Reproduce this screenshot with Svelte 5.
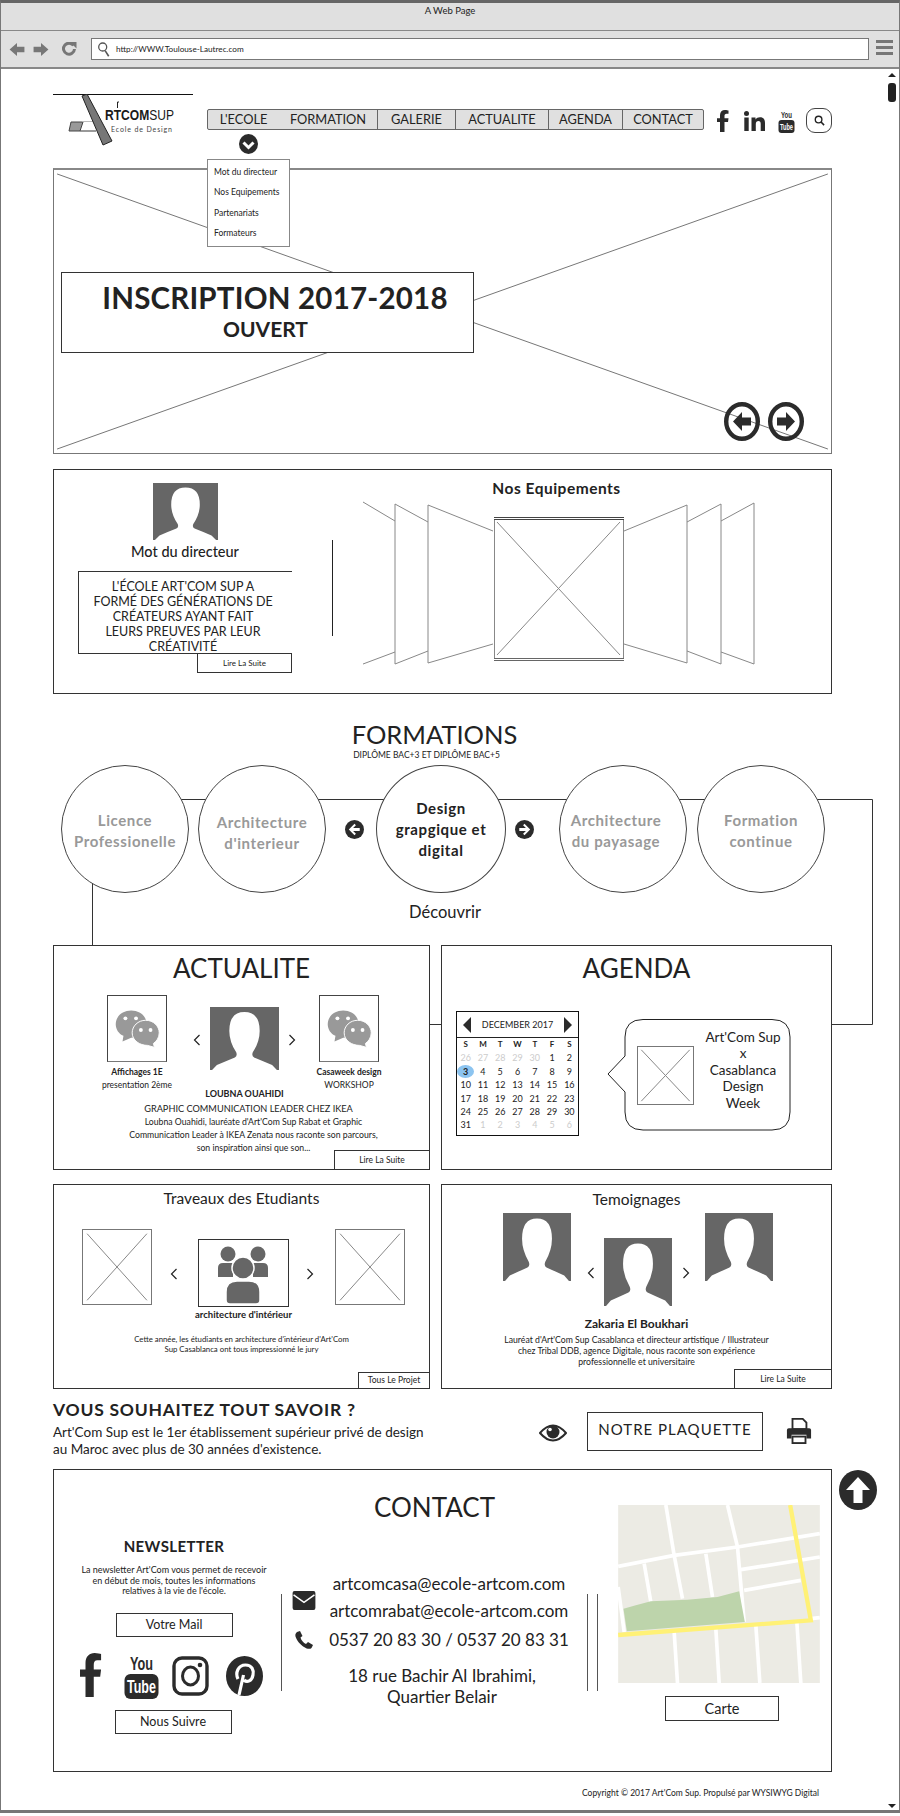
<script>
  const navItems = [
    { label: "L'ECOLE" },
    { label: 'FORMATION' },
    { label: 'GALERIE', divided: true },
    { label: 'ACTUALITE', divided: true },
    { label: 'AGENDA', divided: true },
    { label: 'CONTACT', divided: true }
  ];
  const menu = ['Mot du directeur', 'Nos Equipements', 'Partenariats', 'Formateurs'];
  const weekdays = ['S', 'M', 'T', 'W', 'T', 'F', 'S'];
  const days = [
    [26, 1], [27, 1], [28, 1], [29, 1], [30, 1], [1], [2],
    [3, 0, 1], [4], [5], [6], [7], [8], [9],
    [10], [11], [12], [13], [14], [15], [16],
    [17], [18], [19], [20], [21], [22], [23],
    [24], [25], [26], [27], [28], [29], [30],
    [31], [1, 1], [2, 1], [3, 1], [4, 1], [5, 1], [6, 1]
  ];
</script>

{#snippet avatar(cls)}
  <svg class={cls} viewBox="0 0 100 100" preserveAspectRatio="none">
    <rect width="100" height="100" fill="#666" />
    <path fill="#fff" d="M3 100 L10 92 Q25 85 36 80 Q40 78 38 72 Q28 55 28 38 Q28 8 50 8 Q72 8 72 38 Q72 55 62 72 Q60 78 64 80 Q75 85 90 92 L97 100 Z" />
  </svg>
{/snippet}

{#snippet cross(cls)}
  <svg class={cls} viewBox="0 0 100 100" preserveAspectRatio="none">
    <path d="M6 5 L94 95 M94 5 L6 95" stroke="#888" stroke-width="1" fill="none" vector-effect="non-scaling-stroke" />
  </svg>
{/snippet}

{#snippet chat()}
  <div class="thumb">
    <svg viewBox="0 0 60 67" width="58" height="65">
      <path fill="#999" d="M24 15 C33 15 40 21 40 29 C40 37 33 43 24 43 L15 47 L16 41 C11 39 8 34 8 29 C8 21 15 15 24 15 Z" />
      <path fill="#999" stroke="#fff" stroke-width="1" d="M39 25 C47 25 53 31 53 38 C53 43 50 47 47 49 L48 53 L41 51 C33 51 25 46 25 38 C25 31 31 25 39 25 Z" />
      <circle cx="18" cy="23" r="2" fill="#fff" /><circle cx="29" cy="23" r="2" fill="#fff" />
      <circle cx="34" cy="35" r="2" fill="#fff" /><circle cx="44" cy="35" r="2" fill="#fff" />
    </svg>
  </div>
{/snippet}

{#snippet chevron(dir)}
  <svg class="chev" viewBox="0 0 8 12" width="8" height="12">
    <path d={dir === 'left' ? 'M6.5 1 L1.5 6 L6.5 11' : 'M1.5 1 L6.5 6 L1.5 11'} fill="none" stroke="#222" stroke-width="1.2" />
  </svg>
{/snippet}

{#snippet roundArrow(dir, cls)}
  <svg class={cls} viewBox="0 0 20 20">
    <circle cx="10" cy="10" r="10" fill="#2b2b2b" />
    <path fill="#fff" transform={dir === 'left' ? 'rotate(180 10 10)' : ''} d="M10 4 L16 10 L10 16 L8.5 14.5 L11.5 11.5 H4.5 V8.5 H11.5 L8.5 5.5 Z" />
  </svg>
{/snippet}

{#snippet ringArrow(dir)}
  <svg class="ring" viewBox="0 0 36 39" preserveAspectRatio="none">
    <ellipse cx="18" cy="19.5" rx="15.8" ry="17.3" fill="none" stroke="#2b2b2b" stroke-width="4.4" />
    <path fill="#2b2b2b" transform={dir === 'left' ? 'rotate(180 18 19.5)' : ''} d="M18 10 L27 19.5 L18 29 L18 23.5 H9 V15.5 H18 Z" />
  </svg>
{/snippet}

<div class="window">
  <svg class="wires" viewBox="0 0 900 1816" width="900" height="1816">
    <path d="M150 799.5 H872.5 V1024.5 H832 M430 1024.5 H441 M92.5 883 V945" fill="none" stroke="#333" stroke-width="1" />
  </svg>

  <div class="titlebar">A Web Page</div>
  <div class="toolbar">
    <svg class="tool-arrow" viewBox="0 0 16 14"><path fill="#777" d="M8 0 L0 7 L8 14 V10 H16 V4 H8 Z" /></svg>
    <svg class="tool-arrow" viewBox="0 0 16 14"><path fill="#777" d="M8 0 L16 7 L8 14 V10 H0 V4 H8 Z" /></svg>
    <svg class="tool-reload" viewBox="0 0 16 14"><path fill="none" stroke="#777" stroke-width="3" d="M12.5 3.5 A5.5 5.5 0 1 0 13.5 7" /><path fill="#777" d="M9 0 H15.5 V6.5 Z" /></svg>
    <div class="address">
      <svg viewBox="0 0 16 20" width="15" height="16"><circle cx="7" cy="7.5" r="5" fill="none" stroke="#555" stroke-width="1.6" /><path d="M10 12 L14.5 19" stroke="#555" stroke-width="2" /></svg>
      <span>http://WWW.Toulouse-Lautrec.com</span>
    </div>
    <div class="burger"><i></i><i></i><i></i></div>
  </div>

  <div class="scroll-up"></div>
  <div class="scroll-thumb"></div>
  <div class="scroll-down"></div>

  <main class="content">
    <header class="top">
      <svg class="logo" viewBox="53 94 154 74" width="154" height="74">
        <path d="M53 94.5 H193" stroke="#111" stroke-width="1.2" />
        <path d="M71 122 L83 122 L80 131 L69 131 Z" fill="#999" stroke="#444" stroke-width="1" />
        <path d="M80 131 H96" stroke="#555" stroke-width="1.2" />
        <path d="M82 121.5 H96" stroke="#bbb" stroke-width="1" />
        <path d="M82 96 L87 94 L112 141 L103 145 Z" fill="#777" stroke="#222" stroke-width="1" />
        <path d="M117.5 102 V108 M117.5 102 H119" stroke="#222" stroke-width="1" />
        <text x="105" y="120" class="logo-name" textLength="69" lengthAdjust="spacingAndGlyphs">RTCOM<tspan class="logo-thin">SUP</tspan></text>
        <text x="111" y="132" class="logo-sub" textLength="61" lengthAdjust="spacing">Ecole de Design</text>
      </svg>

      <div class="nav-wrap">
        <nav class="nav">
          {#each navItems as item}
            <span class:divided={item.divided}>{item.label}</span>
          {/each}
        </nav>
        <svg class="nav-chev" viewBox="0 0 19 20">
          <ellipse cx="9.5" cy="10" rx="9.5" ry="10" fill="#2b2b2b" />
          <path d="M4.5 8.5 L9.5 13.5 L14.5 8.5" fill="none" stroke="#fff" stroke-width="3" />
        </svg>
        <ul class="dropdown">
          {#each menu as entry}<li>{entry}</li>{/each}
        </ul>
      </div>

      <div class="top-social">
        <svg class="i-f" viewBox="0 0 24 48" preserveAspectRatio="none"><path fill="#2b2b2b" d="M15 48 V26 H22 L23 18 H15 V13 C15 10 16 8 19 8 H23 V1 C22 1 19 0 16 0 C10 0 6 4 6 11 V18 H0 V26 H6 V48 Z" /></svg>
        <svg class="i-in" viewBox="0 0 21 20"><circle cx="2.5" cy="2.5" r="2.5" fill="#2b2b2b" /><rect x="0.3" y="6.5" width="4.4" height="13.5" fill="#2b2b2b" /><path fill="#2b2b2b" d="M7.5 6.5 H11.5 V8.5 C12.5 7 14 6.2 16 6.2 C19.5 6.2 21 8.5 21 12 V20 H16.7 V12.8 C16.7 11 16 10 14.5 10 C12.8 10 11.8 11.2 11.8 13 V20 H7.5 Z" /></svg>
        <svg class="i-yt" viewBox="0 0 17 24">
          <text x="3" y="8.5" class="yt-you" textLength="11" lengthAdjust="spacingAndGlyphs">You</text>
          <rect x="0.5" y="11" width="16" height="13" rx="3" fill="#2b2b2b" />
          <text x="2" y="20.5" class="yt-tube" textLength="13" lengthAdjust="spacingAndGlyphs">Tube</text>
        </svg>
        <div class="search-pill">
          <svg viewBox="0 0 12 12" width="11" height="11"><circle cx="5" cy="5" r="3.6" fill="none" stroke="#222" stroke-width="1.5" /><path d="M7.7 7.7 L11 11" stroke="#222" stroke-width="1.7" /></svg>
        </div>
      </div>
    </header>

    <section class="hero">
      <svg class="hero-x" viewBox="0 0 100 100" preserveAspectRatio="none">
        <path d="M0.4 1.4 L99.6 98.6 M99.6 1.4 L0.4 98.6" stroke="#777" stroke-width="1" fill="none" vector-effect="non-scaling-stroke" />
      </svg>
      <div class="hero-box">
        <h1>INSCRIPTION 2017-2018</h1>
        <p>OUVERT</p>
      </div>
      <div class="hero-arrows">
        {@render ringArrow('left')}
        {@render ringArrow('right')}
      </div>
    </section>

    <section class="intro">
      <div class="director">
        {@render avatar('av-director')}
        <h3>Mot du directeur</h3>
        <div class="quote">L'ÉCOLE ART'COM SUP A<br />FORMÉ DES GÉNÉRATIONS DE<br />CRÉATEURS AYANT FAIT<br />LEURS PREUVES PAR LEUR<br />CRÉATIVITÉ</div>
        <div class="btn quote-btn">Lire La Suite</div>
      </div>
      <div class="intro-rule"></div>
      <div class="gear">
        <h3>Nos Equipements</h3>
        <svg viewBox="361 500 395 170" width="395" height="170">
          <g fill="none" stroke="#888" stroke-width="1">
            <path d="M363 502 L395 521 M363 664 L395 652" />
            <path d="M428 522 L395 504 V664 L428 651" />
            <path d="M493 531 L428 505 V663 L493 644" />
            <path d="M624 531 L687 505 V663 L624 644" />
            <path d="M687 522 L721 504 V664 L687 651" />
            <path d="M721 521 L754 503 V664 L721 652" />
            <path d="M494.5 519 V658.5 M623.5 519 V658.5" />
            <path d="M497 522 L620 655 M620 522 L497 655" />
          </g>
          <path d="M494 517.5 H624 M494 519.5 H624" stroke="#444" stroke-width="1" />
          <path d="M494 658.5 H624 M494 660.5 H624" stroke="#666" stroke-width="1" />
        </svg>
      </div>
    </section>

    <section class="formations">
      <h2>FORMATIONS</h2>
      <p class="diplome">DIPLÔME BAC+3 ET DIPLÔME BAC+5</p>
      <div class="circles">
        <div class="circle">Licence<br />Professionelle</div>
        <div class="circle second">Architecture<br />d'interieur</div>
        {@render roundArrow('left', 'f-prev')}
        <div class="circle current">Design<br />grapgique et<br />digital</div>
        {@render roundArrow('right', 'f-next')}
        <div class="circle fourth">Architecture<br />du payasage</div>
        <div class="circle fifth">Formation<br />continue</div>
      </div>
      <p class="discover">Découvrir</p>
    </section>

    <div class="cards">
      <section class="card news">
        <h2>ACTUALITE</h2>
        <div class="news-row">
          <div class="news-side">
            {@render chat()}
            <strong>Affichages 1E</strong>
            <small>presentation 2ème</small>
          </div>
          {@render chevron('left')}
          <div class="news-main">
            {@render avatar('av-news')}
            <strong>LOUBNA OUAHIDI</strong>
          </div>
          {@render chevron('right')}
          <div class="news-side">
            {@render chat()}
            <strong>Casaweek design</strong>
            <small>WORKSHOP</small>
          </div>
        </div>
        <p class="news-role">GRAPHIC COMMUNICATION LEADER CHEZ IKEA</p>
        <p class="news-text">Loubna Ouahidi, lauréate d'Art'Com Sup Rabat et Graphic<br />Communication Leader à IKEA Zenata nous raconte son parcours,<br />son inspiration ainsi que son...</p>
        <div class="btn corner news-btn">Lire La Suite</div>
      </section>

      <section class="card agenda">
        <h2>AGENDA</h2>
        <div class="agenda-row">
          <div class="calendar">
            <div class="cal-head">
              <svg viewBox="0 0 8 16" width="8" height="16"><path d="M8 0 V16 L0 8 Z" fill="#2b2b2b" /></svg>
              <span>DECEMBER 2017</span>
              <svg viewBox="0 0 8 16" width="8" height="16"><path d="M0 0 V16 L8 8 Z" fill="#2b2b2b" /></svg>
            </div>
            <div class="cal-grid">
              {#each weekdays as d}<b>{d}</b>{/each}
              {#each days as [n, muted, today]}
                <span class:muted class:today>{n}</span>
              {/each}
            </div>
          </div>
          <div class="bubble">
            <svg class="bubble-bg" viewBox="0 0 184 112" width="184" height="112">
              <path d="M36 .5 H165 Q183 .5 183 18 V93 Q183 111 165 111 H36 Q18 111 18 93 V73 L1 55 L18 37 V18 Q18 .5 36 .5 Z" fill="#fff" stroke="#222" stroke-width="1" />
            </svg>
            <div class="bubble-img">{@render cross('fill')}</div>
            <p>Art'Com Sup<br />x<br />Casablanca<br />Design<br />Week</p>
          </div>
        </div>
      </section>
    </div>

    <div class="cards lower">
      <section class="card works">
        <h3>Traveaux des Etudiants</h3>
        <div class="works-row">
          <div class="work-thumb">{@render cross('fill')}</div>
          {@render chevron('left')}
          <div class="work-main">
            <div class="work-pic">
              <svg viewBox="0 0 89 66" width="89" height="66">
                <g fill="#666">
                  <circle cx="29" cy="14" r="7.5" /><circle cx="59" cy="14" r="7.5" />
                  <path d="M19 37 V28 Q19 23 24 23 H34 V37 Z" /><path d="M69 37 V28 Q69 23 64 23 H54 V37 Z" />
                </g>
                <g fill="#666" stroke="#fff" stroke-width="1.5">
                  <circle cx="44" cy="28" r="11" />
                  <path d="M27 60 V52 Q27 41 38 41 H50 Q61 41 61 52 V60 Q61 64 57 64 H31 Q27 64 27 60 Z" />
                </g>
              </svg>
            </div>
            <strong>architecture d'intérieur</strong>
          </div>
          {@render chevron('right')}
          <div class="work-thumb">{@render cross('fill')}</div>
        </div>
        <p class="works-text">Cette année, les étudiants en architecture d'intérieur d'Art'Com<br />Sup Casablanca ont tous impressionné le jury</p>
        <div class="btn corner works-btn">Tous Le Projet</div>
      </section>

      <section class="card talks">
        <h3>Temoignages</h3>
        <div class="talks-row">
          {@render avatar('av-talk')}
          {@render chevron('left')}
          {@render avatar('av-talk low')}
          {@render chevron('right')}
          {@render avatar('av-talk')}
        </div>
        <strong class="talk-name">Zakaria El Boukhari</strong>
        <p class="talk-text">Lauréat d'Art'Com Sup Casablanca et directeur artistique / Illustrateur<br />chez Tribal DDB, agence Digitale, nous raconte son expérience<br />professionnelle et universitaire</p>
        <div class="btn corner talks-btn">Lire La Suite</div>
      </section>
    </div>

    <section class="cta">
      <div class="cta-text">
        <h2>VOUS SOUHAITEZ TOUT SAVOIR ?</h2>
        <p>Art'Com Sup est le 1er établissement supérieur privé de design<br />au Maroc avec plus de 30 années d'existence.</p>
      </div>
      <svg class="eye" viewBox="0 0 28 20">
        <path d="M1 10 Q14 -5 27 10 Q14 25 1 10 Z" fill="none" stroke="#2b2b2b" stroke-width="2" />
        <circle cx="14" cy="9" r="6.5" fill="#2b2b2b" />
        <circle cx="11" cy="6.5" r="1.8" fill="#fff" />
      </svg>
      <div class="plaquette">NOTRE PLAQUETTE</div>
      <svg class="printer" viewBox="0 0 28 28">
        <path d="M7 1 H18 L22 5 V12 H7 Z" fill="#fff" stroke="#2b2b2b" stroke-width="2" />
        <path d="M3 11 H25 Q27 11 27 13 V22 H22 V18 H6 V22 H1 V13 Q1 11 3 11 Z" fill="#2b2b2b" />
        <rect x="7" y="20" width="14" height="7" fill="#fff" stroke="#2b2b2b" stroke-width="2" />
      </svg>
    </section>

    <section class="contact">
      <svg class="to-top" viewBox="0 0 38 40">
        <ellipse cx="19" cy="20" rx="19" ry="20" fill="#2b2b2b" />
        <path d="M19 7 L31 20 H23.5 V33 H14.5 V20 H7 Z" fill="#fff" />
      </svg>

      <div class="newsletter">
        <h3>NEWSLETTER</h3>
        <p>La newsletter Art'Com vous permet de recevoir<br />en début de mois, toutes les informations<br />relatives à la vie de l'école.</p>
        <div class="btn wide">Votre Mail</div>
        <div class="follow">
          <svg class="s-f" viewBox="0 0 24 48" preserveAspectRatio="none"><path fill="#2b2b2b" d="M15 48 V26 H22 L23 18 H15 V13 C15 10 16 8 19 8 H23 V1 C22 1 19 0 16 0 C10 0 6 4 6 11 V18 H0 V26 H6 V48 Z" /></svg>
          <svg class="s-yt" viewBox="0 0 35 46">
            <text x="6" y="17" class="s-you" textLength="23" lengthAdjust="spacingAndGlyphs">You</text>
            <rect x="0.5" y="21" width="34" height="25" rx="6" fill="#2b2b2b" />
            <text x="3" y="40" class="s-tube" textLength="29" lengthAdjust="spacingAndGlyphs">Tube</text>
          </svg>
          <svg class="s-ig" viewBox="0 0 37 40">
            <rect x="2" y="2" width="33" height="36" rx="8" fill="none" stroke="#2b2b2b" stroke-width="3.4" />
            <ellipse cx="18.5" cy="20" rx="8" ry="9" fill="none" stroke="#2b2b2b" stroke-width="3" />
            <circle cx="28" cy="9" r="2.3" fill="#2b2b2b" />
          </svg>
          <svg class="s-pin" viewBox="0 0 37 40">
            <ellipse cx="18.5" cy="20" rx="18.5" ry="20" fill="#2b2b2b" />
            <path d="M13 39 L17.5 19 M12 23 C9 17 12 9 19.5 9 C26 9 28 14 27 19 C26 25 21 27 18 24" fill="none" stroke="#fff" stroke-width="3.2" />
          </svg>
        </div>
        <div class="btn wide follow-btn">Nous Suivre</div>
      </div>

      <div class="v-rule"></div>

      <div class="coords">
        <h2>CONTACT</h2>
        <div class="coord-row mails">
          <svg class="mail" viewBox="0 0 24 20"><rect width="24" height="20" rx="2" fill="#2b2b2b" /><path d="M1 4 L12 12 L23 4" fill="none" stroke="#fff" stroke-width="1.6" /></svg>
          <p>artcomcasa@ecole-artcom.com<br />artcomrabat@ecole-artcom.com</p>
        </div>
        <div class="coord-row phones">
          <svg class="phone" viewBox="0 0 18 18"><path fill="#2b2b2b" d="M2 1 L5 0 L7.5 5 L5.5 6.5 C6 9 8.5 12 11 13 L13 11 L18 14 L16.5 17 C15 18.5 12 18 9 16 C5 13.5 1.5 9 0.5 5.5 C0 3.5 0.8 2 2 1 Z" /></svg>
          <p>0537 20 83 30 / 0537 20 83 31</p>
        </div>
        <p class="address-text">18 rue Bachir Al Ibrahimi,<br />Quartier Belair</p>
      </div>

      <div class="v-rule"></div>
      <div class="v-rule second-rule"></div>

      <div class="map-col">
        <svg viewBox="22 14 605 534" width="202" height="178">
          <rect x="22" y="14" width="605" height="534" fill="#ecebe4" />
          <g fill="none" stroke="#fff" stroke-width="11">
            <path d="M22 198 L190 165 L380 140 L627 100" />
            <path d="M390 208 L627 170 M400 270 L570 240 M600 355 L627 352" />
            <path d="M165 14 L190 165 L215 295 M350 14 L380 140 L400 365" />
            <path d="M100 190 L120 305 M285 160 L305 290 M22 260 L40 395" />
            <path d="M190 395 L200 548 M315 385 L325 548 M435 375 L447 548 M558 365 L570 548" />
          </g>
          <path d="M38 325 L75 315 L120 303 L230 298 L320 290 L385 273 L402 365 L48 393 Z" fill="#bdd4ab" />
          <path d="M538 14 L600 360 L22 404" fill="none" stroke="#fff176" stroke-width="13" />
        </svg>
        <div class="btn carte">Carte</div>
      </div>
    </section>

    <footer class="copyright">Copyright © 2017 Art'Com Sup. Propulsé par WYSIWYG Digital</footer>
  </main>
</div>

<style>
  :global(body) {
    margin: 0;
    background: #fff;
  }

  .window {
    position: relative;
    width: 900px;
    height: 1813px;
    box-sizing: border-box;
    border: 1px solid #777;
    border-top: 3px solid #666;
    border-bottom: 3px solid #777;
    font-family: Lato, "Open Sans", sans-serif;
    color: #222;
    background: #fff;
    overflow: hidden;
  }

  .wires {
    position: absolute;
    top: -3px;
    left: -1px;
  }

  .titlebar {
    position: relative;
    height: 28px;
    box-sizing: border-box;
    background: #e0e0e0;
    border-bottom: 1px solid #888;
    text-align: center;
    font-size: 9.5px;
    line-height: 16px;
  }

  .toolbar {
    position: relative;
    display: flex;
    align-items: center;
    height: 38px;
    box-sizing: border-box;
    padding-left: 8px;
    background: #e0e0e0;
    border-bottom: 2px solid #888;
  }

  .tool-arrow {
    width: 16px;
    height: 13px;
    margin-right: 8px;
  }

  .tool-reload {
    width: 16px;
    height: 14px;
    margin-left: 4px;
  }

  .address {
    display: flex;
    align-items: center;
    gap: 5px;
    width: 778px;
    height: 22px;
    box-sizing: border-box;
    margin-left: 14px;
    padding-left: 4px;
    background: #fff;
    border: 1px solid #777;
    font-size: 8.2px;
  }

  .burger {
    margin-left: 7px;
    width: 17px;
  }

  .burger i {
    display: block;
    height: 3px;
    margin-bottom: 3px;
    background: #777;
  }

  .scroll-up,
  .scroll-down {
    position: absolute;
    left: 887px;
    width: 0;
    height: 0;
    border-left: 4px solid transparent;
    border-right: 4px solid transparent;
  }

  .scroll-up {
    top: 70px;
    border-bottom: 4px solid #222;
  }

  .scroll-down {
    top: 1801px;
    border-top: 4px solid #222;
  }

  .scroll-thumb {
    position: absolute;
    left: 887px;
    top: 80px;
    width: 8px;
    height: 19px;
    border-radius: 3px;
    background: #222;
  }

  .content {
    position: relative;
    width: 779px;
    margin-left: 52px;
  }

  .top {
    display: flex;
    height: 74px;
    margin-top: 25px;
  }

  .logo {
    flex: none;
  }

  .logo-name {
    font-family: "Liberation Sans", sans-serif;
    font-size: 14.5px;
    font-weight: 700;
    fill: #1a1a1a;
  }

  .logo-thin {
    font-weight: 400;
  }

  .logo-sub {
    font-size: 7px;
    fill: #444;
  }

  .nav-wrap {
    position: relative;
    z-index: 3;
    margin-top: 15px;
  }

  .nav {
    display: grid;
    grid-template-columns: 71px 98px 78px 93px 74px 81px;
    height: 21px;
    box-sizing: border-box;
    background: #e0e0e0;
    border: 1px solid #666;
    border-radius: 2px;
    font-size: 12.8px;
    line-height: 19px;
    text-align: center;
  }

  .nav .divided {
    border-left: 1px solid #666;
  }

  .nav-chev {
    position: absolute;
    top: 25px;
    left: 32px;
    width: 19px;
    height: 20px;
  }

  .dropdown {
    position: absolute;
    top: 50px;
    left: 0;
    width: 83px;
    height: 88px;
    box-sizing: border-box;
    margin: 0;
    padding: 2px 0 0 6px;
    list-style: none;
    background: #fff;
    border: 1px solid #888;
    font-size: 8.5px;
    line-height: 20.3px;
  }

  .top-social {
    display: flex;
    align-items: center;
    height: 25px;
    margin: 14px 0 0 13px;
  }

  .i-f {
    width: 12px;
    height: 22px;
  }

  .i-in {
    width: 21px;
    height: 20px;
    margin-left: 15px;
  }

  .i-yt {
    width: 17px;
    height: 24px;
    margin-left: 13px;
  }

  .yt-you,
  .yt-tube {
    font-family: "Liberation Sans", sans-serif;
    font-weight: 700;
    font-size: 9px;
  }

  .yt-you {
    fill: #2b2b2b;
  }

  .yt-tube {
    fill: #fff;
  }

  .search-pill {
    display: flex;
    align-items: center;
    justify-content: center;
    width: 26px;
    height: 25px;
    box-sizing: border-box;
    margin-left: 11px;
    border: 1px solid #444;
    border-radius: 9px;
  }

  .hero {
    position: relative;
    height: 286px;
    box-sizing: border-box;
    border: 1px solid #777;
    border-top: 2px solid #888;
  }

  .hero-x {
    position: absolute;
    inset: 0;
    width: 100%;
    height: 100%;
  }

  .hero-box {
    position: absolute;
    top: 102px;
    left: 7px;
    width: 413px;
    height: 81px;
    box-sizing: border-box;
    background: #fff;
    border: 1px solid #333;
    text-align: center;
  }

  .hero-box h1 {
    margin: 7px 0 0 15px;
    font-size: 29.5px;
    line-height: 36px;
    font-weight: 700;
    letter-spacing: 0.2px;
  }

  .hero-box p {
    margin: 0 0 0 -4px;
    font-size: 21px;
    line-height: 26px;
    font-weight: 700;
  }

  .hero-arrows {
    position: absolute;
    top: 232px;
    left: 670px;
    display: flex;
    gap: 8px;
  }

  .ring {
    width: 36px;
    height: 39px;
  }

  .intro {
    display: flex;
    height: 225px;
    box-sizing: border-box;
    margin-top: 15px;
    border: 1px solid #333;
  }

  .director {
    display: flex;
    flex-direction: column;
    align-items: center;
    flex: none;
    width: 214px;
    margin-left: 24px;
    padding-top: 13px;
  }

  .av-director {
    width: 65px;
    height: 57px;
  }

  .director h3 {
    margin: 0;
    font-size: 14.5px;
    line-height: 24px;
    font-weight: 500;
  }

  .gear h3 {
    margin: 0;
    font-size: 15.5px;
    line-height: 24px;
    font-weight: 700;
    letter-spacing: 0.5px;
  }

  .quote {
    align-self: stretch;
    height: 83px;
    box-sizing: border-box;
    margin-top: 7px;
    padding: 7px 5px 0 0;
    border: 1px solid #333;
    border-right: 0;
    font-size: 12.5px;
    line-height: 15px;
    text-align: center;
  }

  .btn {
    box-sizing: border-box;
    border: 1px solid #333;
    background: #fff;
    text-align: center;
  }

  .quote-btn {
    align-self: flex-end;
    width: 95px;
    height: 19px;
    border-top: 0;
    font-size: 8px;
    line-height: 18px;
  }

  .intro-rule {
    flex: none;
    width: 1px;
    height: 96px;
    margin: 70px 0 0 40px;
    background: #222;
  }

  .gear {
    flex: none;
    width: 391px;
    margin-left: 28px;
    padding-top: 6px;
    text-align: center;
  }

  .gear svg {
    display: block;
  }

  .formations {
    position: relative;
    text-align: center;
  }

  .formations h2 {
    margin: 24px 16px 0 0;
    font-size: 25.5px;
    line-height: 32px;
    font-weight: 400;
  }

  .diplome {
    margin: 0 32px 0 0;
    font-size: 8.5px;
    line-height: 10px;
  }

  .circles {
    display: flex;
    align-items: center;
    height: 128px;
    margin-top: 5px;
    padding-left: 8px;
  }

  .circle {
    position: relative;
    display: flex;
    align-items: center;
    justify-content: center;
    flex: none;
    width: 128px;
    height: 128px;
    box-sizing: border-box;
    padding-top: 3px;
    border: 1px solid #444;
    border-radius: 50%;
    background: #fff;
    color: #999;
    font-size: 15px;
    line-height: 20.5px;
    font-weight: 700;
    letter-spacing: 0.6px;
  }

  .second {
    margin-left: 9px;
    padding-top: 7px;
  }

  .current {
    width: 130px;
    margin-left: 12px;
    padding-top: 0;
    color: #222;
    line-height: 21px;
  }

  .fourth {
    margin-left: 25px;
    padding-right: 14px;
  }

  .fifth {
    margin-left: 10px;
  }

  .f-prev,
  .f-next {
    flex: none;
    width: 19px;
    height: 19px;
  }

  .f-prev {
    margin-left: 19px;
  }

  .f-next {
    margin-left: 9px;
  }

  .discover {
    margin: 9px 0 0 5px;
    font-size: 16.5px;
    line-height: 20px;
  }

  .cards {
    display: grid;
    grid-template-columns: 377px 391px;
    gap: 11px;
    margin-top: 23px;
  }

  .cards.lower {
    margin-top: 14px;
  }

  .card {
    position: relative;
    box-sizing: border-box;
    height: 225px;
    background: #fff;
    border: 1px solid #333;
  }

  .lower .card {
    height: 205px;
  }

  .card h2 {
    margin: 7px 0 0;
    font-size: 26px;
    line-height: 30px;
    font-weight: 400;
    text-align: center;
  }

  .corner {
    position: absolute;
    right: 0;
    bottom: 0;
    border-right: 0;
    border-bottom: 0;
    font-size: 8.5px;
  }

  .news-row {
    display: flex;
    height: 107px;
    margin: 12px 0 0 25px;
  }

  .news-side {
    display: flex;
    flex-direction: column;
    align-items: center;
    flex: none;
    width: 116px;
    font-size: 8.5px;
    white-space: nowrap;
  }

  .news-side:last-child {
    width: 100px;
    margin-left: 1px;
  }

  .news-side strong {
    margin-top: 4px;
    line-height: 12px;
    font-weight: 700;
  }

  .news-side small {
    font-size: 8.5px;
    line-height: 14px;
  }

  .thumb {
    width: 60px;
    height: 67px;
    box-sizing: border-box;
    border: 1px solid #444;
    border-bottom-color: #777;
  }

  .chev {
    flex: none;
    margin-top: 39px;
  }

  .news-row .chev {
    margin-left: -2px;
    margin-right: 2px;
  }

  .news-main {
    display: flex;
    flex-direction: column;
    align-items: center;
    flex: none;
    width: 69px;
    margin: 12px 11px 0 7px;
    white-space: nowrap;
  }

  .av-news {
    width: 69px;
    height: 63px;
  }

  .news-main strong {
    margin-top: 18px;
    font-size: 9px;
    line-height: 12px;
    font-weight: 700;
  }

  .news-role,
  .news-text {
    margin: 0;
    text-align: center;
    line-height: 13px;
  }

  .news-role {
    padding-left: 14px;
    font-size: 9.2px;
  }

  .news-text {
    padding-left: 24px;
    font-size: 8.7px;
  }

  .news-btn {
    width: 95px;
    height: 19px;
    line-height: 18px;
  }

  .agenda-row {
    display: flex;
    align-items: flex-start;
    margin-top: 28px;
    padding-left: 14px;
  }

  .calendar {
    flex: none;
    width: 123px;
    height: 125px;
    box-sizing: border-box;
    border: 1px solid #111;
  }

  .cal-head {
    display: flex;
    align-items: center;
    justify-content: space-between;
    height: 25px;
    padding: 0 6px;
    border-bottom: 1px solid #222;
    font-size: 9px;
  }

  .cal-grid {
    display: grid;
    grid-template-columns: repeat(7, 1fr);
    grid-auto-rows: 13.4px;
    font-size: 9px;
    line-height: 13.4px;
    text-align: center;
  }

  .cal-grid b {
    font-weight: 700;
    font-size: 8px;
  }

  .muted {
    color: #ccc;
  }

  .today {
    border-radius: 50%;
    background: #8cc4f0;
    font-weight: 700;
  }

  .bubble {
    position: relative;
    display: flex;
    align-items: flex-start;
    flex: none;
    width: 184px;
    height: 112px;
    margin: 8px 0 0 28px;
    padding-left: 30px;
    box-sizing: border-box;
  }

  .bubble-bg {
    position: absolute;
    top: 0;
    left: 0;
  }

  .bubble-img {
    position: relative;
    flex: none;
    width: 57px;
    height: 59px;
    box-sizing: border-box;
    margin-top: 27px;
    border: 1px solid #777;
  }

  .fill {
    display: block;
    width: 100%;
    height: 100%;
  }

  .bubble p {
    position: relative;
    flex: none;
    width: 98px;
    margin: 10px 0 0;
    font-size: 13.5px;
    line-height: 16.4px;
    text-align: center;
  }

  .card h3 {
    margin: 1px 0 0;
    font-size: 15.5px;
    line-height: 24px;
    font-weight: 400;
    text-align: center;
  }

  .works-row {
    display: flex;
    height: 93px;
    margin-top: 19px;
    padding-left: 28px;
  }

  .work-thumb {
    flex: none;
    width: 70px;
    height: 76px;
    box-sizing: border-box;
    border: 1px solid #777;
  }

  .works-row .chev:nth-child(2) {
    margin-left: 18px;
  }

  .works-row .chev:nth-child(4) {
    margin-left: 17px;
  }

  .work-main {
    display: flex;
    flex-direction: column;
    align-items: center;
    flex: none;
    width: 91px;
    margin: 10px 0 0 20px;
    white-space: nowrap;
  }

  .work-pic {
    width: 91px;
    height: 68px;
    box-sizing: border-box;
    border: 1px solid #333;
  }

  .work-main strong {
    font-size: 9.5px;
    line-height: 16px;
    font-weight: 700;
  }

  .work-thumb:last-child {
    margin-left: 21px;
  }

  .works-text {
    margin: 12px 0 0;
    font-size: 7.8px;
    line-height: 10px;
    text-align: center;
  }

  .works-btn {
    width: 71px;
    height: 16px;
    line-height: 14px;
  }

  .talks h3 {
    margin-top: 2px;
  }

  .talks-row {
    display: flex;
    height: 93px;
    margin-top: 2px;
    padding-left: 61px;
  }

  .av-talk {
    flex: none;
    width: 68px;
    height: 68px;
  }

  .av-talk.low {
    margin: 25px 0 0;
  }

  .talks-row .chev {
    margin-top: 54px;
  }

  .talks-row .chev:nth-child(2) {
    margin-left: 16px;
    margin-right: 9px;
  }

  .talks-row .chev:nth-child(4) {
    margin-left: 10px;
    margin-right: 15px;
  }

  .talk-name {
    display: block;
    margin-top: 11px;
    font-size: 12px;
    line-height: 14px;
    font-weight: 700;
    text-align: center;
  }

  .talk-text {
    margin: 3px 0 0;
    font-size: 8.7px;
    line-height: 11px;
    text-align: center;
  }

  .talks-btn {
    width: 97px;
    height: 19px;
    line-height: 18px;
  }

  .cta {
    display: flex;
    align-items: flex-start;
    height: 80px;
    padding-top: 10px;
    box-sizing: border-box;
  }

  .cta-text {
    flex: none;
    width: 486px;
  }

  .cta-text h2 {
    margin: 0;
    font-size: 17.5px;
    line-height: 22px;
    font-weight: 700;
    letter-spacing: 0.75px;
  }

  .cta-text p {
    margin: 3px 0 0;
    font-size: 13.5px;
    line-height: 17px;
  }

  .eye {
    flex: none;
    width: 28px;
    height: 20px;
    margin-top: 24px;
  }

  .plaquette {
    flex: none;
    width: 176px;
    height: 39px;
    box-sizing: border-box;
    margin: 13px 0 0 20px;
    border: 1px solid #333;
    font-size: 15px;
    line-height: 33px;
    text-align: center;
    letter-spacing: 1px;
  }

  .printer {
    flex: none;
    width: 26px;
    height: 28px;
    margin: 18px 0 0 23px;
  }

  .contact {
    position: relative;
    display: flex;
    height: 303px;
    box-sizing: border-box;
    border: 1px solid #333;
  }

  .to-top {
    position: absolute;
    top: 0;
    left: 785px;
    width: 38px;
    height: 40px;
  }

  .newsletter {
    display: flex;
    flex-direction: column;
    align-items: center;
    flex: none;
    width: 214px;
    padding: 67px 0 0 13px;
  }

  .newsletter h3 {
    margin: 0;
    font-size: 15px;
    line-height: 18px;
    font-weight: 700;
    letter-spacing: 0.4px;
  }

  .newsletter p {
    margin: 10px 0 0;
    font-size: 9px;
    line-height: 10.5px;
    text-align: center;
    white-space: nowrap;
  }

  .wide {
    width: 117px;
    height: 24px;
    font-size: 12.5px;
    line-height: 22px;
  }

  .newsletter p + .wide {
    margin-top: 16px;
  }

  .follow {
    display: flex;
    align-items: flex-start;
    align-self: flex-start;
    height: 47px;
    margin: 16px 0 10px 13px;
  }

  .s-f {
    width: 22px;
    height: 44px;
  }

  .s-yt {
    width: 35px;
    height: 46px;
    margin-left: 22px;
  }

  .s-you,
  .s-tube {
    font-family: "Liberation Sans", sans-serif;
    font-weight: 700;
    font-size: 19px;
  }

  .s-you {
    fill: #2b2b2b;
  }

  .s-tube {
    fill: #fff;
  }

  .s-ig {
    width: 37px;
    height: 40px;
    margin: 3px 0 0 13px;
  }

  .s-pin {
    width: 37px;
    height: 40px;
    margin: 3px 0 0 17px;
  }

  .follow-btn {
    margin-right: 2px;
  }

  .v-rule {
    flex: none;
    width: 1px;
    height: 97px;
    margin-top: 124px;
    background: #555;
  }

  .second-rule {
    margin-left: 9px;
  }

  .coords {
    flex: none;
    width: 305px;
    padding-top: 22px;
    text-align: center;
  }

  .coords h2 {
    margin: 0 0 48px;
    font-size: 26px;
    line-height: 30px;
    font-weight: 400;
  }

  .coord-row {
    display: flex;
    align-items: flex-start;
    padding-left: 10px;
  }

  .coord-row p {
    flex: none;
    width: 266px;
    margin: 0;
    font-size: 17px;
    line-height: 27px;
    white-space: nowrap;
  }

  .mail {
    flex: none;
    width: 24px;
    height: 19px;
    margin-top: 21px;
  }

  .phones {
    margin-top: 2px;
  }

  .phone {
    flex: none;
    width: 18px;
    height: 18px;
    margin: 5px 3px 0 3px;
  }

  .address-text {
    margin: 12px 0 0 15px;
    font-size: 17px;
    line-height: 21px;
  }

  .map-col {
    flex: none;
    padding: 35px 0 0 20px;
  }

  .map-col svg {
    display: block;
  }

  .carte {
    width: 114px;
    height: 25px;
    margin: 13px 0 0 47px;
    font-size: 14.5px;
    line-height: 23px;
  }

  .copyright {
    margin-top: 15px;
    padding-right: 13px;
    font-size: 8.5px;
    line-height: 12px;
    text-align: right;
  }
</style>
